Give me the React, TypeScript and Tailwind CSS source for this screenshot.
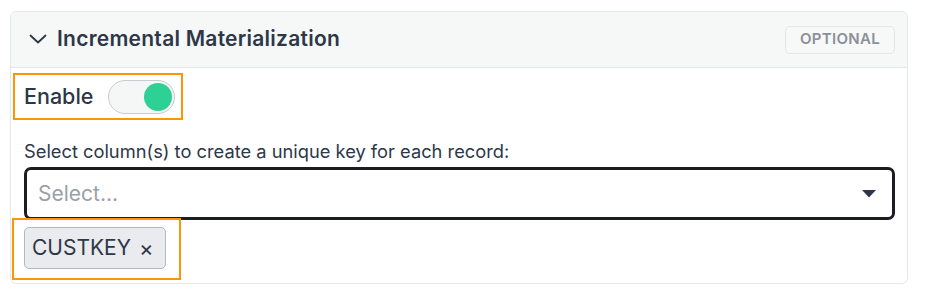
import React from "react";

export default function App() {
  return (
    <div className="w-[928px] h-[302px] bg-white pt-[11px] pl-[10px]" style={{ fontFamily: "Inter, 'Noto Sans', sans-serif" }}>
      <div className="w-[898px] h-[273px] border border-[#e5e7ea] rounded-[6px] overflow-hidden flex flex-col">
        {/* header */}
        <div className="h-[56px] shrink-0 bg-[#f6f7f7] border-b border-[#e5e7ea] flex items-center pl-[18px] pr-[12px] pb-[2px]">
          <svg width="18" height="10" viewBox="0 0 18 10" className="mt-[1px]">
            <path d="M1.5 1.5 L9 8.5 L16.5 1.5" fill="none" stroke="#2d3748" strokeWidth="1.8" strokeLinecap="round" strokeLinejoin="round" />
          </svg>
          <span className="ml-[10px] text-[21px] font-semibold text-[#2d3748] tracking-[0.25px]">Incremental Materialization</span>
          <div className="ml-auto mt-[2px] h-[28px] w-[110px] border border-[#e3e5e8] rounded-[5px] bg-[#f7f8f8] flex items-center justify-center text-[15px] font-semibold text-[#8b9099] tracking-[0.3px]">
            OPTIONAL
          </div>
        </div>
        {/* body */}
        <div className="flex flex-col">
          <div className="ml-[2px] mt-[5px] w-[170px] h-[47px] border-2 border-[#ff9500] flex items-center pl-[9px]">
            <span className="text-[21.5px] font-medium text-[#2d3748]">Enable</span>
            <div className="ml-auto mr-[6px] mt-[1px] w-[67px] h-[34px] rounded-full bg-[#f5f6f6] border border-[#c8cbd0] flex items-center justify-end pr-[2px]">
              <div className="w-[28px] h-[28px] rounded-full bg-[#2dd196]" />
            </div>
          </div>
          <div className="ml-[13px] mt-[20px] text-[18.3px] leading-[22px] text-[#2d3748]">
            Select column(s) to create a unique key for each record:
          </div>
          <div className="ml-[13px] mt-[5px] w-[871px] h-[53px] border-[3px] border-[#1b1d20] rounded-[7px] flex items-center pl-[11px] pr-[16px]">
            <span className="text-[21px] text-[#9aa0a8]">Select...</span>
            <svg width="14" height="8" viewBox="0 0 14 8" className="ml-auto">
              <path d="M0 0 H14 L7 7.5 Z" fill="#2d3748" />
            </svg>
          </div>
          <div className="ml-[1px] mt-[-2px] w-[169px] h-[62px] border-2 border-[#ff9500] pl-[10px] pt-[7px]">
            <div className="w-[142px] h-[42px] rounded-[5px] bg-[#e9ebee] border border-[#b3b8be] flex items-center pl-[7px] text-[21px] text-[#2d3748]">
              <span>CUSTKEY</span>
              <span className="ml-[8px] text-[22px]">×</span>
            </div>
          </div>
        </div>
      </div>
    </div>
  );
}
